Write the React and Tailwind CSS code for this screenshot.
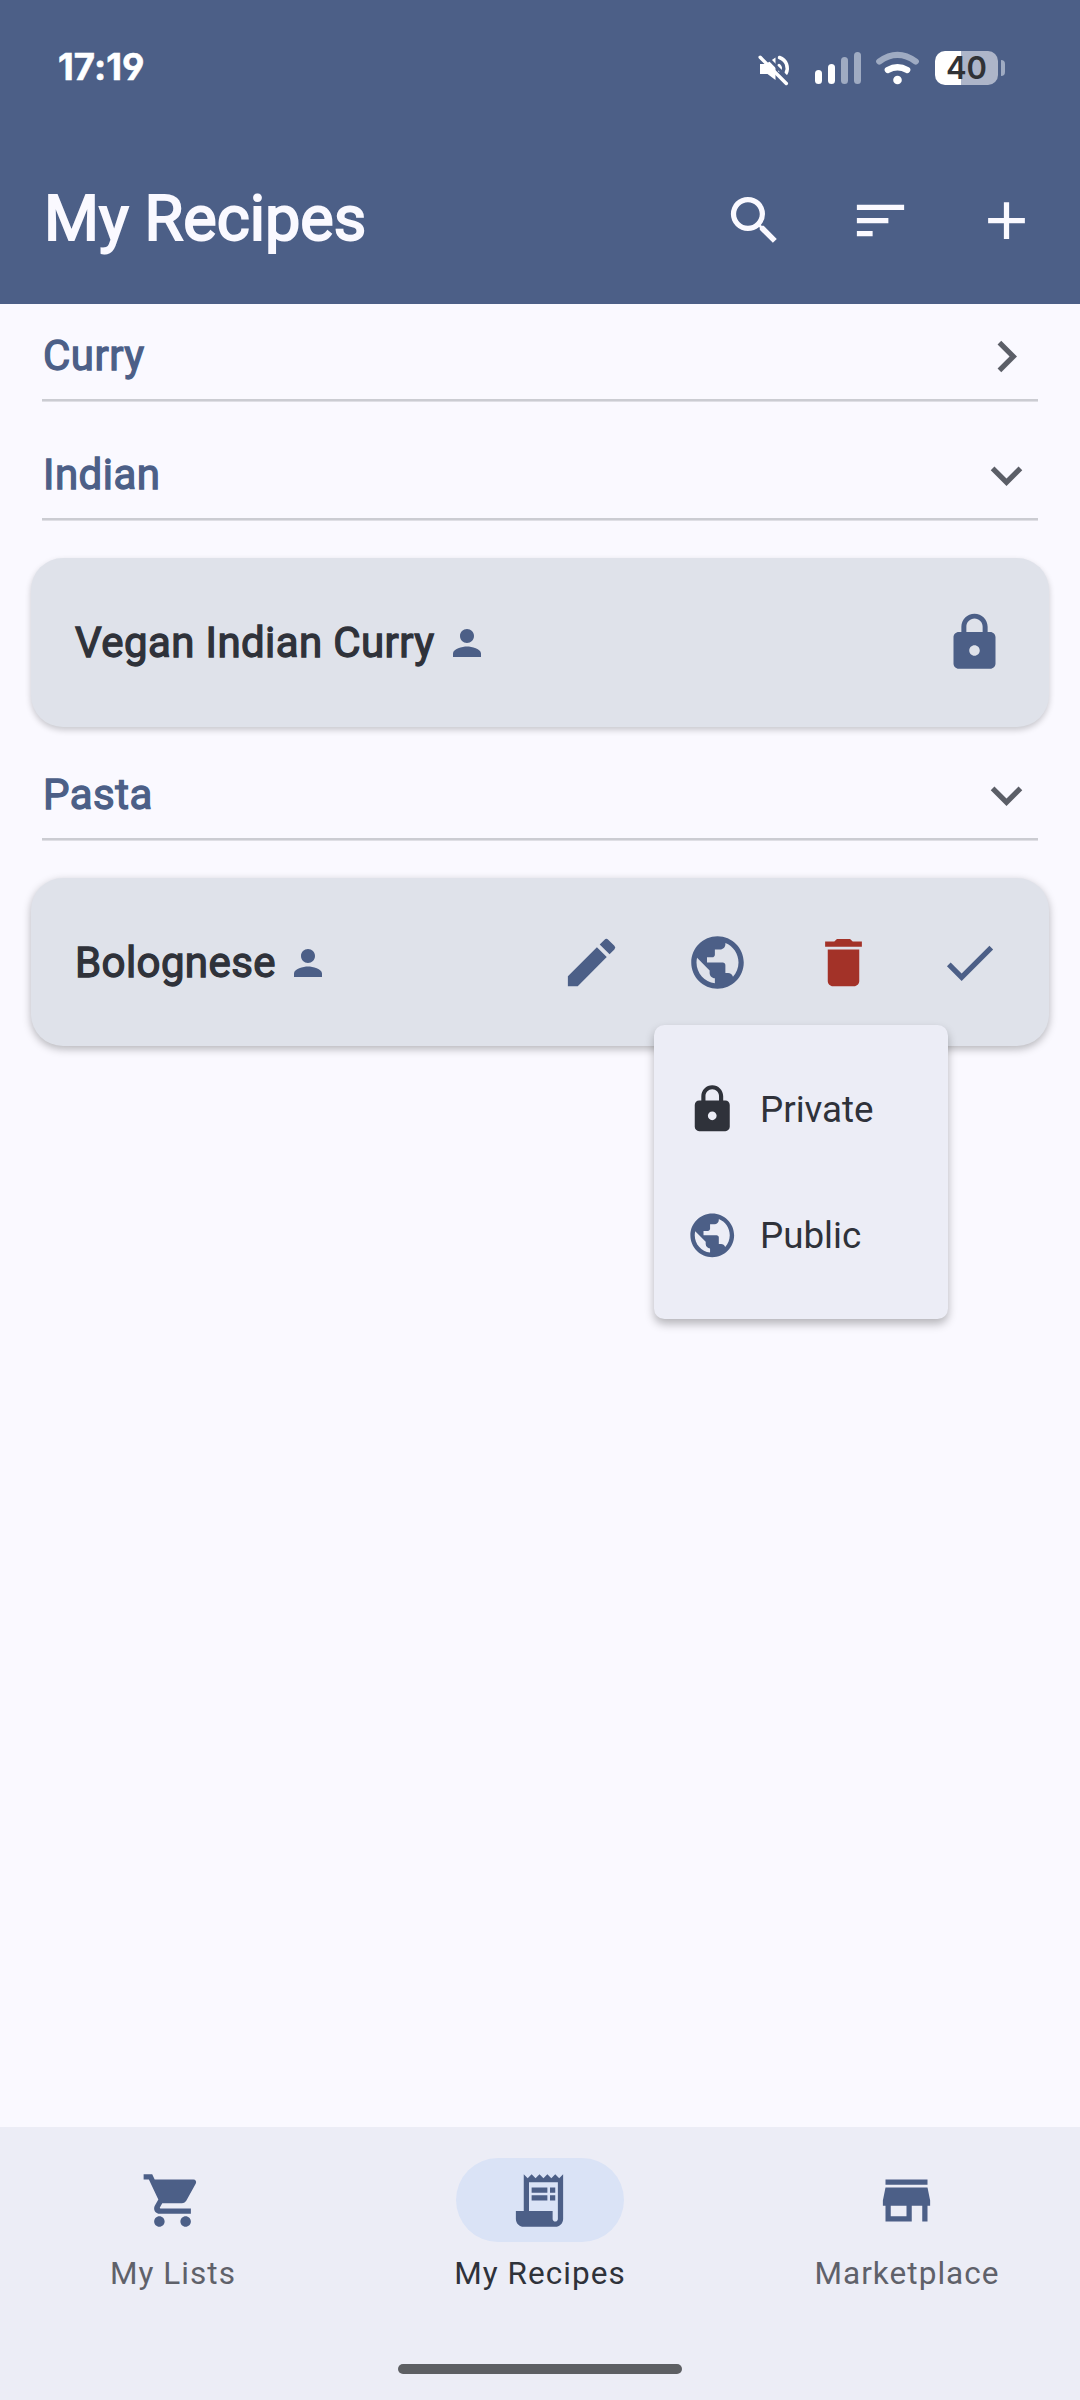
import {
  MdSearch, MdSort, MdAdd, MdChevronRight, MdExpandMore, MdPerson, MdLock, MdEdit,
  MdPublic, MdDelete, MdCheck, MdShoppingCart, MdReceiptLong, MdStore,
} from "react-icons/md";

function MuteIcon() {
  return (
    <svg className="ml-[757px] h-[38px] w-[34px] shrink-0" viewBox="0 -2 34 38" fill="none">
      <path d="M3 13h6l9.500-6.500v22.500l-8-6H3z" fill="#fff" />
      <path d="M22 14.500q2.500 2.500 0.500 5" stroke="#fff" strokeWidth="3.200" strokeLinecap="round" />
      <path d="M22.500 6.500C29.500 9 32 16.500 29 22.500" stroke="#fff" strokeWidth="3.500" strokeLinecap="round" />
      <path d="M6 2L34 30.500" stroke="#4c5f87" strokeWidth="3" />
      <path d="M3.200 6.300L29.300 32.500" stroke="#fff" strokeWidth="3.500" strokeLinecap="round" />
    </svg>
  );
}

function WifiIcon() {
  return (
    <svg className="ml-[14px] h-[34px] w-[44px] shrink-0" viewBox="0 0 44 34" fill="none" strokeLinecap="round">
      <path d="M4.300 10.500Q22.500 -2.700 40.700 10.500" stroke="#9fabc2" strokeWidth="6.300" />
      <path d="M12.800 19Q22.500 13.500 32.200 19" stroke="#fff" strokeWidth="6.300" />
      <circle cx="22.500" cy="29" r="4.300" fill="#fff" />
    </svg>
  );
}

function StatusBar() {
  return (
    <div className="relative flex h-[136px] items-center">
      <span className="absolute top-[45px] left-[58px] font-['Inter',sans-serif] text-[36.500px] leading-[44px] font-bold tracking-[0.100px] text-white [font-feature-settings:'cv04'] [-webkit-text-stroke:0.600px_white] [stroke-linejoin:round]">17:19</span>
      <MuteIcon />
      <div className="ml-[24px] flex h-[32px] items-end gap-[6px]">
        <i className="h-[14px] w-[7px] rounded-full bg-white" />
        <i className="h-[20px] w-[7px] rounded-full bg-white" />
        <i className="h-[27px] w-[7px] rounded-full bg-[#9fabc2]" />
        <i className="h-[32px] w-[7px] rounded-full bg-[#9fabc2]" />
      </div>
      <WifiIcon />
      <div className="ml-[16px] flex h-[34px] w-[63px] items-center justify-center rounded-[10px] bg-linear-to-r from-white from-[41.500%] to-[#adb5c9] to-[41.500%] pb-[1px] font-['Inter',sans-serif] text-[31px] leading-none font-semibold text-[#303236]">40</div>
      <i className="ml-[3px] h-[16px] w-[4px] rounded-r-full bg-[#9fabc2]" />
    </div>
  );
}

function Section({ title, open, className }) {
  const Chevron = open ? MdExpandMore : MdChevronRight;
  return (
    <div className={"mx-[42px] flex h-[97px] items-center justify-between border-b-2 border-[#cbccd2] pt-[9px] shadow-[0_1px_0_#dfdfe5] " + className}>
      <h2 className="pl-[1px] text-[42px] leading-[60px] tracking-[0.500px] text-[#4c5f87] [-webkit-text-stroke:1.300px_#4c5f87]">{title}</h2>
      <Chevron className="size-[63px] text-[#5b5e67]" />
    </div>
  );
}

function Card({ title, children, className }) {
  return (
    <div className={"mx-[31px] flex items-center rounded-[32px] bg-[#dfe2ea] pl-[44px] " + className}>
      <span className="text-[42px] leading-[60px] tracking-[0.400px] text-[#2f323a] [-webkit-text-stroke:1.300px_#2f323a]">{title}</span>
      <MdPerson className="mt-[1px] ml-[11px] size-[42px] text-[#4c5f87]" />
      <div className="ml-auto flex items-center">{children}</div>
    </div>
  );
}

function Slot({ children }) {
  return <button className="flex size-[126px] items-center justify-center">{children}</button>;
}

function NavItem({ Icon, label, active }) {
  return (
    <div className="flex flex-1 flex-col items-center">
      <div className={"flex h-[84px] w-[168px] items-center justify-center rounded-full " + (active ? "bg-[#dae3f6]" : "")}>
        <Icon className="mr-[1px] size-[63px] text-[#4c5f87]" />
      </div>
      <span className={"mt-[11px] text-[31.500px] leading-[42px] tracking-[1.050px] " + (active ? "text-[#2f323a]" : "text-[#5f616a]")}>{label}</span>
    </div>
  );
}

export default function App() {
  return (
    <div className="relative flex h-[2400px] w-[1080px] flex-col overflow-hidden bg-[#faf9ff] font-['Roboto',sans-serif]">
      <header className="h-[304px] bg-[#4c5f87]">
        <StatusBar />
        <div className="flex h-[168px] items-center pr-[11px] pl-[44px]">
          <h1 className="mr-auto pb-[2px] text-[63px] leading-[84px] text-[#faf9ff] [-webkit-text-stroke:2px_#faf9ff]">My Recipes</h1>
          <div className="flex text-[#faf9ff]">
            <Slot><MdSearch className="size-[63px]" /></Slot>
            <Slot><MdSort className="size-[63px]" /></Slot>
            <Slot><MdAdd className="size-[63px]" /></Slot>
          </div>
        </div>
      </header>

      <main className="flex flex-1 flex-col">
        <Section title="Curry" />
        <Section title="Indian" open className="mt-[22px]" />
        <Card title="Vegan Indian Curry" className="mt-[38px] h-[169px] shadow-[0_3px_6px_rgba(0,0,0,0.2)]">
          <MdLock className="mr-[43px] size-[63px] text-[#4c5f87]" />
        </Card>
        <Section title="Pasta" open className="mt-[16px]" />
        <Card title="Bolognese" className="mt-[38px] h-[168px] pt-[1px] shadow-[0_3px_8px_rgba(0,0,0,0.28)]">
          <div className="mr-[17px] flex text-[#4c5f87]">
            <Slot><MdEdit className="size-[63px]" /></Slot>
            <Slot><MdPublic className="size-[63px]" /></Slot>
            <Slot><MdDelete className="size-[63px] text-[#a33228]" /></Slot>
            <Slot><MdCheck className="size-[63px]" /></Slot>
          </div>
        </Card>
      </main>

      <div className="absolute top-[1025px] left-[654px] w-[294px] rounded-[10.500px] bg-[#ecedf6] py-[21px] text-[36.750px] text-[#2f323a] shadow-[0_5px_10px_rgba(0,0,0,0.28)]">
        <div className="flex h-[126px] items-center gap-[22px] pl-[31.500px]">
          <MdLock className="size-[52.500px]" />
          <span className="pt-[2px]">Private</span>
        </div>
        <div className="flex h-[126px] items-center gap-[22px] pl-[31.500px]">
          <MdPublic className="size-[52.500px] text-[#4c5f87]" />
          <span className="pt-[2px]">Public</span>
        </div>
      </div>

      <nav className="flex h-[273px] flex-col items-center bg-[#ecedf6] pt-[31px]">
        <div className="flex w-full gap-[21px]">
          <NavItem Icon={MdShoppingCart} label="My Lists" />
          <NavItem Icon={MdReceiptLong} label="My Recipes" active />
          <NavItem Icon={MdStore} label="Marketplace" />
        </div>
        <div className="mt-auto mb-[26px] h-[10px] w-[284px] rounded-full bg-[#5d5f63]" />
      </nav>
    </div>
  );
}
